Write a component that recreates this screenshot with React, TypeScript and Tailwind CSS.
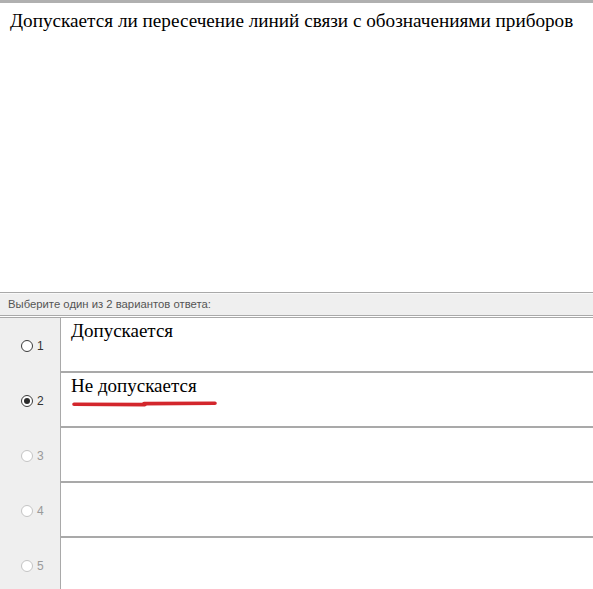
import React from "react";

type Option = {
  n: number;
  text?: string;
  checked?: boolean;
  disabled?: boolean;
  marked?: boolean;
};

const options: Option[] = [
  { n: 1, text: "Допускается" },
  { n: 2, text: "Не допускается", checked: true, marked: true },
  { n: 3, disabled: true },
  { n: 4, disabled: true },
  { n: 5, disabled: true },
];

const Radio = ({ checked, disabled }: { checked?: boolean; disabled?: boolean }) => (
  <span
    className={`flex h-[12px] w-[12px] items-center justify-center rounded-full border bg-white ${
      disabled ? "border-[#c4c4c4]" : "border-[#3a3a3a]"
    }`}
  >
    {checked && <span className="h-[6px] w-[6px] rounded-full bg-[#2a2a2a]" />}
  </span>
);

// hand-drawn red stroke under the chosen answer
const Underline = () => (
  <svg width="150" height="8" viewBox="0 0 150 8" className="mt-[2px]">
    <path d="M3 4.2 L74 4.6" stroke="#d3262c" strokeWidth="3.6" strokeLinecap="round" fill="none" />
    <path d="M73 3.6 L144 3.2" stroke="#d3262c" strokeWidth="3.6" strokeLinecap="round" fill="none" />
  </svg>
);

const App = () => {
  return (
    <div className="flex h-[589px] w-[593px] flex-col overflow-hidden bg-white">
      <div className="h-[3px] shrink-0 bg-[#b0b0b0]" />
      <div className="h-[289px] shrink-0 px-[10px] pt-[6px] font-['Liberation_Serif',serif] text-[19.2px] leading-[24px] text-black">
        Допускается ли пересечение линий связи с обозначениями приборов
      </div>

      <div className="shrink-0 border-t border-[#a9a9a9] bg-[#efefef]">
        <div className="h-px bg-[#f9f9f9]" />
        <div className="flex h-[21px] items-center px-[8px] font-['Liberation_Sans',sans-serif] text-[11.3px] text-[#555]">
          Выберите один из 2 вариантов ответа:
        </div>
      </div>
      <div className="h-px shrink-0 bg-[#a9a9a9]" />
      <div className="h-px shrink-0 bg-white" />
      <div className="h-px shrink-0 bg-[#a9a9a9]" />

      <div className="flex flex-col">
        {options.map((o) => (
          <div key={o.n} className="flex h-[55px] shrink-0">
            <div className="flex w-[61px] items-center gap-[4px] border-r border-[#a9a9a9] bg-[#efefef] pl-[21px]">
              <Radio checked={o.checked} disabled={o.disabled} />
              <span
                className={`font-['Liberation_Sans',sans-serif] text-[12px] ${
                  o.disabled ? "text-[#9a9a9a]" : "text-[#333]"
                }`}
              >
                {o.n}
              </span>
            </div>
            <div className="flex-1 border-b-2 border-[#a9a9a9] pl-[10px] pt-[1px] font-['Liberation_Serif',serif] text-[19px] leading-[24px] text-black">
              {o.text}
              {o.marked && <Underline />}
            </div>
          </div>
        ))}
      </div>
    </div>
  );
};

export default App;
